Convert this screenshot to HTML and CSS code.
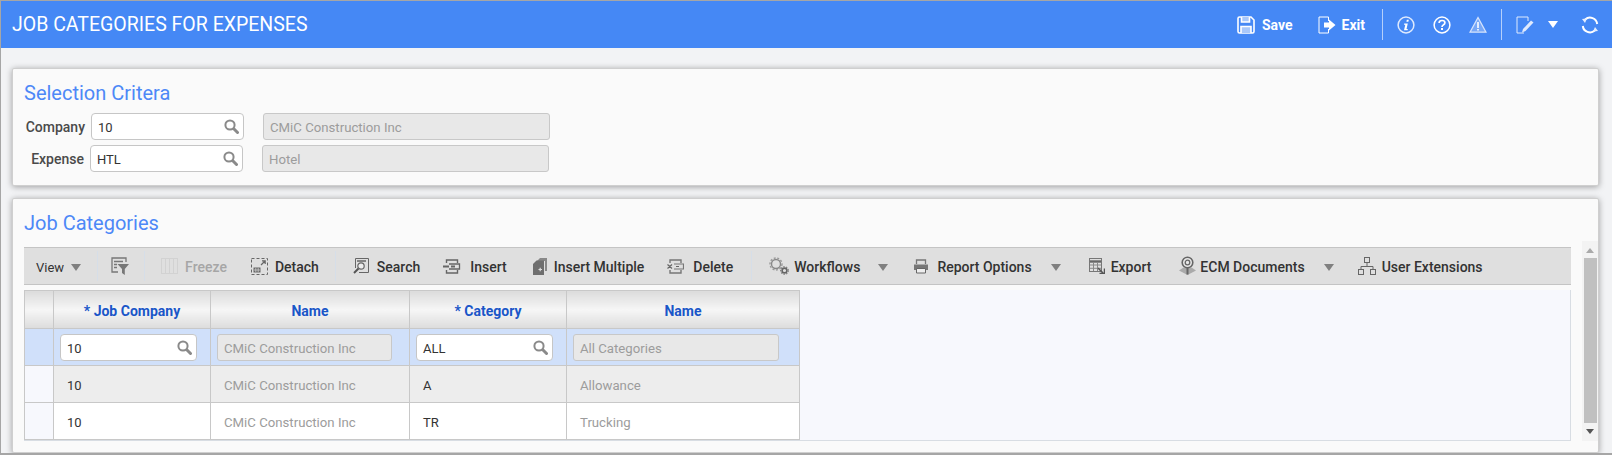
FILE: index.html
```html
<!DOCTYPE html>
<html>
<head>
	<title>Job Categories for Expenses</title>
	<meta charset="UTF-8">
	<link rel="stylesheet" href="styles.css">
</head>
<body>
	<svg class="sprite" xmlns="http://www.w3.org/2000/svg">
		<symbol id="i-search" viewBox="0 0 15 15">
			<circle cx="6" cy="6" r="4.6" fill="none" stroke="#8a8a8a" stroke-width="2"/>
			<path d="M9.8 9.8 L13.5 13.5" stroke="#8a8a8a" stroke-width="3" stroke-linecap="round"/>
		</symbol>
		<symbol id="i-arrow" viewBox="0 0 10 7">
			<path d="M0 0 H10 L5 7 Z" fill="#808080"/>
		</symbol>
	</svg>

	<div class="app">
		<!-- barra superior -->
		<header class="topbar">
			<div class="topbar-title">JOB CATEGORIES FOR EXPENSES</div>
			<div class="topbar-actions">
				<a class="top-btn top-save">
					<svg width="18" height="18" viewBox="0 0 18 18" fill="none" stroke="#fff" stroke-width="1.6">
						<path d="M1 2.5 Q1 1 2.5 1 H14 L17 4 V15.5 Q17 17 15.5 17 H2.5 Q1 17 1 15.5 Z"/>
						<path d="M4.5 1 V6 H12.5 V1" fill="#a9c8fa"/>
						<path d="M4 17 V10.5 H14 V17" fill="#a9c8fa"/>
					</svg>
					Save
				</a>
				<a class="top-btn top-exit">
					<svg width="18" height="18" viewBox="0 0 18 18" fill="none">
						<path d="M10.5 5 V1 H1 V17 H10.5 V13" stroke="#fff" stroke-width="1"/>
						<path d="M6 6.5 H11 V3.5 L17.5 9 L11 14.5 V11.5 H6 Z" fill="#fff"/>
					</svg>
					Exit
				</a>
				<span class="top-sep top-sep-first"></span>
				<svg class="top-icon top-info" width="18" height="18" viewBox="0 0 18 18" fill="none">
					<circle cx="9" cy="9" r="7.9" stroke="#dfeafd" stroke-width="1.5"/>
					<path d="M9.8 3.8 h2 l-.4 2 h-2 Z M7.2 7.6 h3.6 l-1.3 5.4 h1.3 l-.2 1.2 H7 l1.3 -5.4 H7 Z" fill="#fff"/>
				</svg>
				<svg class="top-icon top-help" width="18" height="18" viewBox="0 0 18 18" fill="none">
					<circle cx="9" cy="9" r="7.9" stroke="#fff" stroke-width="1.5"/>
					<path d="M6.1 7 Q6.2 4.5 9 4.5 Q11.9 4.5 11.9 6.8 Q11.9 8.2 10.3 9 Q9 9.7 9 11" stroke="#fff" stroke-width="1.7"/>
					<path d="M8 12 h2 v2 h-2 Z" fill="#fff"/>
				</svg>
				<svg class="top-icon top-warn" width="18" height="18" viewBox="0 0 18 18" fill="none">
					<path d="M9 1.5 L17 16.2 H1 Z" stroke="#d5e3fc" stroke-width="1.3" fill="#78a8f7"/>
					<path d="M8.2 6 h1.6 v6 h-1.6 Z M8.2 13 h1.6 v1.6 h-1.6 Z" fill="#fff"/>
				</svg>
				<span class="top-sep top-sep-second"></span>
				<svg class="top-icon top-edit" width="18" height="18" viewBox="0 0 18 18" fill="none">
					<path d="M12 5 V1 H1 V17 H8" stroke="#dfeafd" stroke-width="1"/>
					<path d="M6 16.5 L7 13 L15 4.5 L17.5 6.5 L9.5 15 Z" fill="#dfeafd"/>
				</svg>
				<svg class="top-arrow" width="10" height="7" viewBox="0 0 10 7"><path d="M0 0 H10 L5 7 Z" fill="#fff"/></svg>
				<svg class="top-icon top-refresh" width="18" height="18" viewBox="0 0 18 18" fill="none">
					<path d="M4.2 3.4 A7.3 7.3 0 0 1 16.2 8" stroke="#fff" stroke-width="2"/>
					<path d="M13.8 14.6 A7.3 7.3 0 0 1 1.8 10" stroke="#fff" stroke-width="2"/>
					<path d="M1 3 L6 2.4 L4 7 Z M17 15 L12 15.6 L14 11 Z" fill="#e4eefe"/>
				</svg>
			</div>
		</header>

		<main class="content">
			<section class="panel panel-selection">
				<h2 class="panel-title">Selection Critera</h2>
				<div class="form-row">
					<label class="form-label">Company</label>
					<div class="lov"><span>10</span><svg class="lov-icon"><use href="#i-search"/></svg></div>
					<div class="readonly readonly-main">CMiC Construction Inc</div>
				</div>
				<div class="form-row form-row-alt">
					<label class="form-label">Expense</label>
					<div class="lov"><span>HTL</span><svg class="lov-icon"><use href="#i-search"/></svg></div>
					<div class="readonly readonly-main">Hotel</div>
				</div>
			</section>

			<section class="panel panel-grid">
				<h2 class="panel-title">Job Categories</h2>
				<div class="grid-body">
					<div class="grid-main">
						<div class="toolbar">
							<a class="tb-btn tb-view">View</a>
							<svg class="tb-arrow tb-arrow-view"><use href="#i-arrow"/></svg>
							<span class="tb-sep tb-sep-view"></span>
							<svg class="tb-icon tb-filter" width="18" height="18" viewBox="0 0 18 18" fill="none">
								<path d="M15 5 V1 H1 V15 H7" stroke="#777" stroke-width="1.3"/>
								<path d="M3 4.5 H12 M3 7.5 H6 M3 10.5 H6" stroke="#777" stroke-width="1.3"/>
								<path d="M6.5 7 H18 L13.8 12 V18 L11 16 V12 Z" fill="#777"/>
							</svg>
							<span class="tb-sep tb-sep-filter"></span>
							<a class="tb-btn tb-freeze is-disabled">
								<svg width="17" height="16" viewBox="0 0 17 16" fill="none" stroke="#d2d2d2">
									<rect x="0.5" y="0.5" width="16" height="15"/>
									<path d="M4.5 1 V15 M8.5 1 V15 M12.5 1 V15"/>
								</svg>
								Freeze
							</a>
							<a class="tb-btn tb-detach">
								<svg width="17" height="17" viewBox="0 0 17 17" fill="none">
									<rect x="0.5" y="0.5" width="16" height="16" stroke="#666" stroke-dasharray="3 2"/>
									<path d="M10 7 L14 3 M11 2.8 H14.2 V6" stroke="#666" stroke-width="1.2"/>
									<path d="M2.5 9.5 H9.5 V14.5 H2.5 Z" fill="#666"/>
									<path d="M4.8 10 V14 M7.2 10 V14 M3 12 H9" stroke="#ddd" stroke-width=".7"/>
								</svg>
								Detach
							</a>
							<span class="tb-sep tb-sep-detach"></span>
							<a class="tb-btn tb-search">
								<svg width="16" height="16" viewBox="0 0 16 16" fill="none">
									<path d="M2.5 10 V0.5 H15.5 V14.5 H6" stroke="#666"/>
									<path d="M4 3 H13" stroke="#666" stroke-width="1.5"/>
									<circle cx="8" cy="8" r="3.2" stroke="#666" stroke-width="1.2" fill="#eee"/>
									<path d="M5.5 10.5 L1 15" stroke="#555" stroke-width="2"/>
								</svg>
								Search
							</a>
							<a class="tb-btn tb-insert">
								<svg width="18" height="15" viewBox="0 0 18 15" fill="none">
									<path d="M3.5 4 V1 H14.5 V4" stroke="#666" stroke-width="1.4"/>
									<path d="M6 5 H16.5 V10 H6" stroke="#666" stroke-width="1.3"/>
									<path d="M3.5 11 V14 H14.5 V11" stroke="#666" stroke-width="1.4"/>
									<path d="M0 7.5 H6 M8 7.5 H12" stroke="#666" stroke-width="1.8"/>
								</svg>
								Insert
							</a>
							<a class="tb-btn tb-multi">
								<svg width="14" height="17" viewBox="0 0 14 17">
									<path d="M4 3 L7 0 H14 V13 H12 V3 Z" fill="#888"/>
									<path d="M0 6 L3.5 2.5 H11 V17 H0 Z" fill="#6e6e6e"/>
									<path d="M5.5 11.5 H9 M7.2 9.7 V13.3" stroke="#ddd" stroke-width="1.2"/>
								</svg>
								Insert Multiple
							</a>
							<a class="tb-btn tb-delete">
								<svg width="17" height="15" viewBox="0 0 17 15" fill="none">
									<path d="M3 4 V1 H14 V4" stroke="#777" stroke-width="1.4"/>
									<path d="M7 5 H16.5 V10 H7" stroke="#777" stroke-width="1.2"/>
									<path d="M3 11 V14 H14 V11" stroke="#777" stroke-width="1.4"/>
									<path d="M0.5 5.5 L5 9.5 M5 5.5 L0.5 9.5 M9 7.5 H12" stroke="#666" stroke-width="1.2"/>
								</svg>
								Delete
							</a>
							<span class="tb-sep tb-sep-delete"></span>
							<a class="tb-btn tb-workflows">
								<svg width="20" height="18" viewBox="0 0 20 18" fill="none">
									<circle cx="7" cy="7" r="4.5" stroke="#888" stroke-width="1.4"/>
									<circle cx="7" cy="7" r="6" stroke="#999" stroke-width="1.4" stroke-dasharray="2 1.6"/>
									<circle cx="15.5" cy="13.5" r="2.4" stroke="#666" stroke-width="1.6"/>
									<circle cx="15.5" cy="13.5" r="3.8" stroke="#777" stroke-width="1.1" stroke-dasharray="1.5 1.2"/>
								</svg>
								Workflows
							</a>
							<svg class="tb-arrow tb-arrow-flows"><use href="#i-arrow"/></svg>
							<a class="tb-btn tb-report">
								<svg width="16" height="15" viewBox="0 0 16 15" fill="none">
									<path d="M3.5 5 V1 H12.5 V5" stroke="#777" stroke-width="1.3"/>
									<path d="M1 5.5 H15 V11 H1 Z" fill="#777"/>
									<path d="M3.5 9.5 H12.5 V14 H3.5 Z" fill="#eee" stroke="#666"/>
								</svg>
								Report Options
							</a>
							<svg class="tb-arrow tb-arrow-report"><use href="#i-arrow"/></svg>
							<a class="tb-btn tb-export">
								<svg width="16" height="16" viewBox="0 0 16 16" fill="none">
									<rect x="0.5" y="0.5" width="12" height="13" stroke="#777"/>
									<path d="M1 3.5 H12" stroke="#666" stroke-width="2.4"/>
									<path d="M1 7 H12 M1 10.3 H12 M4.5 4 V13 M8.5 4 V13" stroke="#888"/>
									<path d="M9 10 L14 15 M15.5 10.5 V15.5 H10.5" stroke="#555" stroke-width="1.5"/>
								</svg>
								Export
							</a>
							<a class="tb-btn tb-ecm">
								<svg width="19" height="20" viewBox="0 0 19 20" fill="none">
									<path d="M1 14.5 L5.5 11.5 H13.5 L18 14.5 L9.5 19 Z" fill="#aaa"/>
									<circle cx="9.5" cy="6.5" r="5.3" fill="#e8e8e8" stroke="#666" stroke-width="1.6"/>
									<circle cx="9.5" cy="6.5" r="2.3" stroke="#666" stroke-width="1.3"/>
									<path d="M9.5 12 V18.5" stroke="#666" stroke-width="2"/>
								</svg>
								ECM Documents
							</a>
							<svg class="tb-arrow tb-arrow-ecm"><use href="#i-arrow"/></svg>
							<a class="tb-btn tb-user">
								<svg width="18" height="18" viewBox="0 0 18 18" fill="none" stroke="#666">
									<rect x="6.5" y="0.5" width="5" height="5"/>
									<rect x="0.5" y="12.5" width="5" height="5"/>
									<rect x="12.5" y="12.5" width="5" height="5"/>
									<path d="M9 6 V9.5 M3 12 V9.5 H15 V12"/>
								</svg>
								User Extensions
							</a>
						</div>

						<div class="grid-area">
							<table class="grid">
								<colgroup>
									<col class="col-sel">
									<col class="col-company">
									<col class="col-name">
									<col class="col-category">
									<col class="col-desc">
								</colgroup>
								<thead>
									<tr>
										<th></th>
										<th>* Job Company</th>
										<th>Name</th>
										<th>* Category</th>
										<th>Name</th>
									</tr>
								</thead>
								<tbody>
									<tr class="row-edit">
										<td class="sel"></td>
										<td><div class="lov lov-grid"><span>10</span><svg class="lov-icon"><use href="#i-search"/></svg></div></td>
										<td><div class="readonly readonly-name">CMiC Construction Inc</div></td>
										<td><div class="lov lov-grid"><span>ALL</span><svg class="lov-icon"><use href="#i-search"/></svg></div></td>
										<td><div class="readonly readonly-desc">All Categories</div></td>
									</tr>
									<tr class="row-alt">
										<td class="sel"></td>
										<td class="val">10</td>
										<td class="val muted">CMiC Construction Inc</td>
										<td class="val">A</td>
										<td class="val muted">Allowance</td>
									</tr>
									<tr>
										<td class="sel"></td>
										<td class="val">10</td>
										<td class="val muted">CMiC Construction Inc</td>
										<td class="val">TR</td>
										<td class="val muted">Trucking</td>
									</tr>
								</tbody>
							</table>
						</div>
					</div>

					<div class="scrollbar">
						<span class="scroll-up"></span>
						<span class="scroll-thumb"></span>
						<span class="scroll-down"></span>
					</div>
				</div>
			</section>
		</main>
	</div>
</body>
</html>
```

FILE: styles.css
```css
* {
	box-sizing: border-box;
}

html, body {
	margin: 0;
	padding: 0;
}

body {
	font-family: Roboto, "Liberation Sans", Arial, sans-serif;
	font-size: 13px;
	color: #333;
	overflow: hidden;
}

.sprite {
	display: none;
}

.app {
	height: 455px;
	background-color: #f2f3f5;
	border-top: 1px solid #a6a6a6;
	border-left: 1px solid #a6a6a6;
	border-bottom: 2px solid #a6a6a6;
	overflow: hidden;
}

/* barra superior */
.topbar {
	display: flex;
	align-items: center;
	height: 47px;
	padding-left: 11px;
	background-color: #4588f5;
	color: #fff;
}

.topbar-title {
	font-size: 19.5px;
}

.topbar-actions {
	display: flex;
	align-items: center;
	margin-left: auto;
	padding-right: 13px;
}

.top-btn {
	display: flex;
	align-items: center;
	gap: 7px;
	font-size: 14px;
	font-weight: 700;
}

.top-exit {
	margin-left: 25px;
	gap: 6px;
}

.top-sep {
	width: 1px;
	height: 31px;
	background-color: #b5cffa;
}

.top-sep-first {
	margin-left: 17px;
}

.top-info {
	margin-left: 14px;
}

.top-help,
.top-warn {
	margin-left: 18px;
}

.top-sep-second {
	margin-left: 14px;
}

.top-edit {
	margin-left: 14px;
}

.top-arrow {
	margin-left: 14px;
}

.top-refresh {
	margin-left: 23px;
}

/* paneles */
.content {
	padding: 20px 13px 0 11px;
}

.panel {
	background-color: #fafafa;
	border: 1px solid #cfcfcf;
	border-radius: 2px;
	box-shadow: 0 1px 6px rgba(0, 0, 0, 0.35);
	padding: 12px 0 0 11px;
}

.panel-selection {
	height: 118px;
	margin-bottom: 12px;
}

.panel-grid {
	height: 255px;
}

.panel-title {
	margin: 0;
	font-size: 20px;
	font-weight: 400;
	line-height: 24px;
	color: #4d88f7;
}

.form-row {
	display: flex;
	align-items: center;
	height: 27px;
	margin-bottom: 5px;
}

.panel-title + .form-row {
	margin-top: 8px;
}

.form-label {
	width: 61px;
	margin-right: 6px;
	text-align: right;
	font-size: 14px;
	font-weight: 500;
	color: #4a4a4a;
}

.form-row-alt .form-label {
	width: 60px;
}

.lov {
	display: flex;
	align-items: center;
	justify-content: space-between;
	width: 153px;
	height: 27px;
	padding: 0 4px 0 6px;
	background-color: #fff;
	border: 1px solid #c6c6c6;
	border-radius: 4px;
}

.lov span {
	padding-top: 2px;
}

.lov-icon {
	width: 15px;
	height: 15px;
}

.readonly {
	display: flex;
	align-items: center;
	height: 27px;
	padding: 2px 6px 0;
	background-color: #e8e8e8;
	border: 1px solid #c8c8c8;
	border-radius: 3px;
	font-size: 13.2px;
	color: #9c9c9c;
}

.readonly-main {
	width: 287px;
	margin-left: 19px;
}

.readonly-name {
	width: 175px;
}

.readonly-desc {
	width: 206px;
}

/* toolbar */
.grid-body {
	display: flex;
	margin-top: 6px;
}

.grid-main {
	width: 1547px;
	padding-top: 6px;
}

.toolbar {
	display: flex;
	align-items: center;
	height: 38px;
	padding-top: 2px;
	padding-left: 12px;
	background-color: #dfdfdf;
	border-top: 1px solid #c4c4c4;
	border-bottom: 1px solid #c4c4c4;
	white-space: nowrap;
}

.tb-btn {
	display: flex;
	align-items: center;
	gap: 7px;
	font-size: 14px;
	font-weight: 500;
	color: #333;
}

.tb-btn svg,
.tb-icon {
	margin-top: -2px;
}

.tb-view {
	font-size: 13px;
	font-weight: 400;
}

.is-disabled {
	color: #a6a6a6;
}

.tb-arrow {
	width: 10px;
	height: 7px;
}

.tb-sep {
	width: 1px;
	height: 30px;
	margin-top: -2px;
	background-color: #d6dee8;
}

.tb-arrow-view { margin-left: 7px; }
.tb-sep-view { margin-left: 16px; }
.tb-filter { margin-left: 13px; }
.tb-sep-filter { margin-left: 15px; }
.tb-freeze { margin-left: 16px; }
.tb-detach { margin-left: 24px; }
.tb-sep-detach { margin-left: 16px; }
.tb-search { margin-left: 17px; gap: 8px; }
.tb-insert { margin-left: 23px; gap: 9px; }
.tb-multi { margin-left: 26px; }
.tb-delete { margin-left: 23px; gap: 9px; }
.tb-sep-delete { margin-left: 18px; }
.tb-workflows { margin-left: 17px; gap: 5px; }
.tb-arrow-flows { margin-left: 18px; }
.tb-report { margin-left: 25px; gap: 8px; }
.tb-arrow-report { margin-left: 19px; }
.tb-export { margin-left: 28px; gap: 6px; }
.tb-ecm { margin-left: 27px; gap: 3px; }
.tb-arrow-ecm { margin-left: 19px; }
.tb-user { margin-left: 24px; gap: 6px; }

/* grid */
.grid-area {
	height: 151px;
	margin-top: 5px;
	background-color: #f7f8fd;
	border-right: 1px solid #d8dde3;
	border-bottom: 1px solid #d8dde3;
}

.grid {
	table-layout: fixed;
	width: 775px;
	border-collapse: collapse;
}

.col-sel { width: 29px; }
.col-company { width: 157px; }
.col-name { width: 199px; }
.col-category { width: 157px; }
.col-desc { width: 233px; }

.grid th,
.grid td {
	border: 1px solid #c8c8c8;
	padding: 0 0 0 6px;
}

.grid th {
	height: 38px;
	padding: 2px 0 0;
	background: linear-gradient(#dcdcdc, #f6f6f6 50%, #dcdcdc);
	color: #1a56c8;
	font-size: 14px;
	font-weight: 700;
	text-align: center;
}

.grid td {
	height: 37px;
}

.grid td.sel {
	background-color: #f7f8fd;
	padding: 0;
}

.grid td.val {
	padding: 2px 0 0 13px;
}

.row-edit td,
.row-edit td.sel {
	background-color: #d0e0fa;
}

.row-alt td {
	background-color: #ededed;
}

.grid tbody tr:not(.row-edit):not(.row-alt) td:not(.sel) {
	background-color: #fff;
}

.grid td.muted {
	font-size: 13.2px;
	color: #9c9c9c;
}

.lov-grid {
	width: 137px;
}

/* scroll */
.scrollbar {
	display: flex;
	flex-direction: column;
	align-items: center;
	width: 16px;
	height: 200px;
	margin-left: 11px;
	background-color: #f3f3f3;
}

.scroll-up,
.scroll-down {
	width: 0;
	height: 0;
	border-left: 4px solid transparent;
	border-right: 4px solid transparent;
}

.scroll-up {
	margin: 7px 0 5px;
	border-bottom: 5px solid #aaa;
}

.scroll-down {
	margin-top: 6px;
	border-top: 5px solid #555;
}

.scroll-thumb {
	width: 13px;
	height: 165px;
	background-color: #c0c0c0;
}
```
